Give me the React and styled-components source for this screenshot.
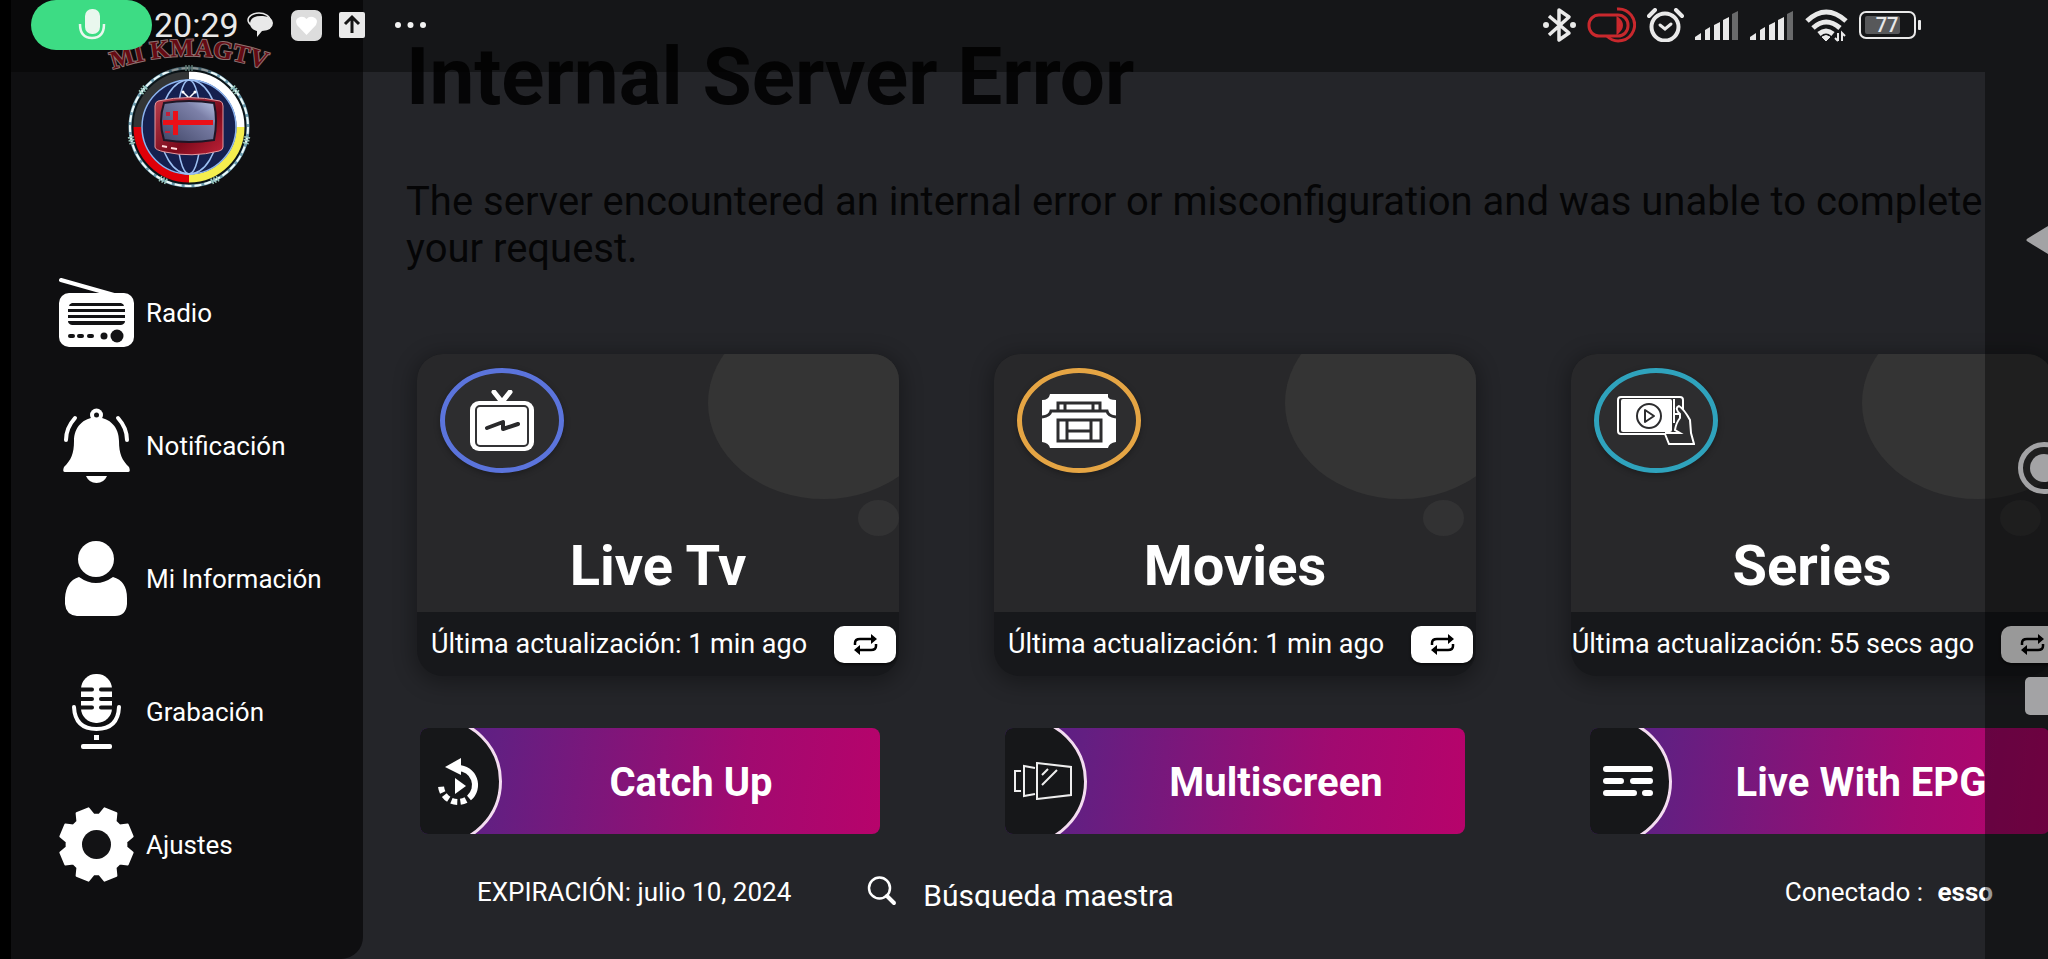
import React, { useState } from "react";
import styled, { createGlobalStyle } from "styled-components";

const GlobalStyle = createGlobalStyle`
  * {
    box-sizing: border-box;
  }

  body {
    margin: 0;
    background: #000000;
    color: #ffffff;
    font-family: Roboto, "Liberation Sans", sans-serif;
    overflow: hidden;
  }

  button,
  input {
    font-family: inherit;
    color: inherit;
    border: 0;
    padding: 0;
    background: none;
  }

  h1, h2, p {
    margin: 0;
  }

  svg {
    display: block;
    flex-shrink: 0;
  }
`;

const Screen = styled.div`
  position: relative;
  display: flex;
  min-height: 100vh;
  padding-left: 11px;
  overflow: hidden;
  background: linear-gradient(90deg, #000000 11px, #242529 11px);
`;

const Sidebar = styled.aside`
  display: flex;
  flex-direction: column;
  flex-shrink: 0;
  width: 352px;
  padding-top: 20px;
  background: #0f0f11;
  border-radius: 0 0 22px 0;
`;

const LogoWrapper = styled.div`
  display: flex;
  justify-content: center;
  height: 255px;
`;

const Menu = styled.nav`
  display: flex;
  flex-direction: column;
  gap: 58px;
  padding-left: 48px;
`;

const MenuLink = styled.a`
  display: flex;
  align-items: center;
  gap: 12px;
  height: 75px;
  font-size: 26px;
  color: #ffffff;
  text-decoration: none;
`;

const Main = styled.main`
  flex: 1;
  min-width: 0;
  padding-top: 30px;
`;

const ErrorMessage = styled.section`
  padding: 0 60px 0 43px;
  color: #050506;

  h1 {
    font-size: 80px;
    line-height: 94px;
    font-weight: 700;
  }

  p {
    margin-top: 54px;
    font-size: 40px;
    line-height: 47px;
  }
`;

const Cards = styled.section`
  display: grid;
  grid-template-columns: repeat(3, 1fr);
  gap: 95px;
  margin: 82px -5px 0 54px;
`;

const Card = styled.article`
  min-width: 0;
  border-radius: 26px;
  background: #17181b;
  box-shadow: 0 4px 20px 4px rgba(0, 0, 0, 0.3);
`;

const CardBody = styled.div`
  position: relative;
  display: flex;
  flex-direction: column;
  justify-content: space-between;
  height: 258px;
  padding: 14px 23px 13px;
  overflow: hidden;
  border-radius: 26px 26px 0 0;
  background: #28282a;

  h2 {
    position: relative;
    font-size: 56px;
    line-height: 66px;
    text-align: center;
  }
`;

const BigBubble = styled.div`
  position: absolute;
  top: -47px;
  right: -41px;
  width: 232px;
  height: 192px;
  border-radius: 50%;
  background: #343434;
`;

const SmallBubble = styled.div`
  position: absolute;
  top: 146px;
  right: ${(props) => (props.$edge ? "0px" : "12px")};
  width: 41px;
  height: 36px;
  border-radius: 50%;
  background: #323233;
`;

const IconRing = styled.div`
  position: relative;
  display: flex;
  align-items: center;
  justify-content: center;
  width: 124px;
  height: 105px;
  border: 5px solid ${(props) => props.$color};
  border-radius: 50%;
  background: #2d2d2f;
  box-shadow: 0 2px 6px rgba(0, 0, 0, 0.3);
`;

const CardFooter = styled.div`
  display: flex;
  align-items: center;
  justify-content: center;
  gap: 27px;
  height: 64px;
  padding-left: 11px;
  font-size: 27px;
  white-space: nowrap;
`;

const RefreshButton = styled.button`
  display: flex;
  flex-shrink: 0;
  align-items: center;
  justify-content: center;
  width: 62px;
  height: 37px;
  border-radius: 10px;
  background: #ffffff;
  color: #000000;
  box-shadow: 0 2px 3px rgba(0, 0, 0, 0.6);
`;

const Shortcuts = styled.section`
  display: grid;
  grid-template-columns: repeat(3, 1fr);
  gap: 125px;
  margin: 52px -2px 0 57px;
`;

const ShortcutButton = styled.button`
  display: flex;
  align-items: center;
  height: 106px;
  overflow: hidden;
  border-radius: 8px;
  background: linear-gradient(97deg, #521f86 0%, #631f82 17%, #a10a70 70%, #b7036b 100%);
  font-size: 40px;
  font-weight: 700;
  white-space: nowrap;

  span {
    flex: 1;
    padding-top: 3px;
  }
`;

const ShortcutDisc = styled.div`
  display: flex;
  flex-shrink: 0;
  align-items: center;
  justify-content: center;
  width: 86px;
  height: 129px;
  margin-left: -4px;
  padding-right: 2px;
  border: 3px solid #f3dcf0;
  border-radius: 0 65px 65px 0;
  background: #161719;
`;

const StatusRow = styled.footer`
  display: flex;
  align-items: center;
  margin-top: 42px;
  padding: 0 55px 0 114px;
  font-size: 26px;

  strong {
    margin-left: 8px;
  }
`;

const Connected = styled.div`
  margin-left: auto;
`;

const SearchLabel = styled.label`
  display: flex;
  gap: 26px;
  height: 32px;
  margin-left: 76px;
  overflow: hidden;
`;

const SearchInput = styled.input`
  width: 300px;
  height: 39px;
  font-size: 30px;
  outline: none;

  &::placeholder {
    color: #ffffff;
    opacity: 1;
  }
`;

const TopBar = styled.header`
  position: absolute;
  top: 0;
  left: 0;
  right: 0;
  display: flex;
  align-items: flex-start;
  justify-content: space-between;
  height: 72px;
  padding: 0 126px 0 31px;
  background: rgba(0, 0, 0, 0.4);
  color: #e9e9e9;
`;

const BarGroup = styled.div`
  display: flex;
  align-items: center;
  gap: ${(props) => props.$gap}px;
  height: 50px;
`;

const MicPill = styled.div`
  display: flex;
  align-items: center;
  justify-content: center;
  width: 121px;
  height: 50px;
  border-radius: 25px;
  background: #3ddc84;
`;

const Clock = styled.time`
  margin-left: 2px;
  margin-right: 8px;
  font-size: 34px;
`;

const NavBar = styled.nav`
  position: absolute;
  top: 72px;
  right: 0;
  bottom: 0;
  display: flex;
  flex-direction: column;
  gap: 176px;
  width: 63px;
  padding: 142px 0 0 33px;
  overflow: hidden;
  background: rgba(0, 0, 0, 0.4);
`;

const NavButton = styled.button`
  width: 52px;
  height: 52px;
  color: #a3a3a5;
`;

function Logo() {
  return (
    <svg width="190" height="172" viewBox="92 20 190 172">
      <defs>
        <path id="arc" d="M96 76 Q189 36 282 76" />
        <linearGradient id="tv" x1="0" y1="0" x2="1" y2="1">
          <stop offset="0" stopColor="#b8404e" />
          <stop offset="0.6" stopColor="#7d0a1c" />
          <stop offset="1" stopColor="#c02238" />
        </linearGradient>
        <linearGradient id="glass" x1="0" y1="1" x2="1" y2="0">
          <stop offset="0" stopColor="#3f4566" />
          <stop offset="0.7" stopColor="#7c80a8" />
          <stop offset="1" stopColor="#b9c4e6" />
        </linearGradient>
      </defs>
      <text
        fontFamily="'Liberation Serif', serif"
        fontSize="25"
        fontWeight="700"
        fill="#a81220"
        stroke="#e8bcbc"
        strokeWidth="2"
        paintOrder="stroke"
      >
        <textPath href="#arc" startOffset="50%" textAnchor="middle">
          MI KMAGTV
        </textPath>
      </text>
      <circle cx="189" cy="127" r="59" fill="#0b1418" stroke="#6d9db0" strokeWidth="3" />
      <circle cx="189" cy="127" r="59" fill="none" stroke="#eefafa" strokeWidth="2" strokeDasharray="7 3" />
      <g fill="none" strokeWidth="8">
        <path d="M189 75.500a51.500 51.500 0 0 1 51.500 51.500" stroke="#ffffff" />
        <path d="M240.500 127a51.500 51.500 0 0 1-51.500 51.500" stroke="#f5ee4e" />
        <path d="M189 178.500a51.500 51.500 0 0 1-51.500-51.500" stroke="#e00008" />
        <path d="M137.500 127a51.500 51.500 0 0 1 51.500-51.500" stroke="#333536" />
      </g>
      <circle cx="189" cy="127" r="47" fill="#15204f" stroke="#8db4f0" strokeWidth="1.500" />
      <g fill="none" stroke="#9dc0f3" strokeWidth="1.500">
        <ellipse cx="189" cy="127" rx="12" ry="47" />
        <ellipse cx="189" cy="127" rx="29" ry="47" />
      </g>
      {[0, 51, 103, 154, 206, 257, 309].map((angle) => (
        <g key={angle} transform={`rotate(${angle} 189 127)`}>
          <path d="M186 65v6M189 65v6M192 65v6" stroke="#9bc9bd" strokeWidth="1.500" />
        </g>
      ))}
      <path d="M183 92l6 6 6-6" fill="none" stroke="#ffffff" strokeWidth="1.500" />
      <circle cx="183" cy="92" r="1.500" fill="#ffffff" />
      <circle cx="195" cy="92" r="1.500" fill="#ffffff" />
      <path d="M158 101q31-7 62 0q3 1 3 5v41q0 3-4 4q-27 7-54 1q-10-2-10-5v-41q0-4 3-5z" fill="url(#tv)" stroke="#e59aa0" strokeWidth="1" />
      <path d="M164 103q25-4 50 0q4 18 0 37q-25 4-50 0q-6-19 0-37z" fill="url(#glass)" stroke="#1d1626" strokeWidth="2" />
      <path d="M163 120h50v5h-50zM173 111h5v24h-5z" fill="#ea1017" />
      <path d="M166 112h4v4h-4zM165 131h5v2h-5z" fill="#c3203a" />
      <path d="M162 146l5 1M171 148l6 1" stroke="#ffd9d9" strokeWidth="2" />
    </svg>
  );
}

function RadioIcon() {
  return (
    <svg width="75" height="75" viewBox="0 0 75 75">
      <path d="M2 5L55 20" stroke="#ffffff" strokeWidth="4" strokeLinecap="round" />
      <rect x="0" y="18" width="75" height="54" rx="10" fill="#ffffff" />
      <g fill="#131315">
        <path d="M13 28h49q3 1 3 3H10q0-2 3-3z" />
        <rect x="9" y="34" width="57" height="3" />
        <rect x="9" y="40" width="57" height="3" />
        <path d="M9 46h57q0 3-4 4H13q-4-1-4-4z" />
        <rect x="9" y="59" width="7" height="4" rx="2" />
        <rect x="18" y="59" width="7" height="4" rx="2" />
        <rect x="28" y="59" width="7" height="4" rx="2" />
        <circle cx="45" cy="61" r="3.500" />
        <circle cx="58" cy="61" r="6.500" />
      </g>
    </svg>
  );
}

function BellIcon() {
  return (
    <svg width="75" height="75" viewBox="0 0 75 75">
      <path
        d="M37.500 9C24 10 15 19 15 33C15 46 12 52 5 59Q3 64 6 64H69Q72 64 70 59C63 52 60 46 60 33C60 19 51 10 37.500 9z"
        fill="#ffffff"
      />
      <circle cx="37.500" cy="7" r="6.500" fill="#ffffff" />
      <circle cx="37.500" cy="7" r="2.500" fill="#131315" />
      <path d="M27 68h21q-3 7-10.500 7T27 68z" fill="#ffffff" />
      <path d="M16 10Q7 20 7 32M59 10Q68 20 68 32" fill="none" stroke="#ffffff" strokeWidth="4" strokeLinecap="round" />
    </svg>
  );
}

function PersonIcon() {
  return (
    <svg width="75" height="75" viewBox="0 0 75 75">
      <circle cx="37" cy="18" r="18" fill="#ffffff" />
      <path d="M20 36Q37 48 54 36Q68 40 68 57V63Q67 75 56 75H18Q7 74 6 63V57Q7 40 20 36z" fill="#ffffff" />
    </svg>
  );
}

function MicIcon() {
  return (
    <svg width="75" height="75" viewBox="0 0 75 75">
      <rect x="22" y="0" width="31" height="49" rx="15" fill="#ffffff" />
      <path
        d="M22 15.500H33M22 25H33M22 33.500H33M53 15.500H42M53 25H42M53 33.500H42"
        stroke="#131315"
        strokeWidth="4"
        strokeLinecap="round"
      />
      <path d="M15 33Q16 55 37.500 55T60 33" fill="none" stroke="#ffffff" strokeWidth="4" strokeLinecap="round" />
      <rect x="35" y="61" width="5" height="5" fill="#ffffff" />
      <rect x="22" y="70" width="31" height="5" rx="2" fill="#ffffff" />
    </svg>
  );
}

const gearPoint = (radius, degrees) => {
  const angle = (degrees * Math.PI) / 180;
  return `${37.5 + radius * Math.sin(angle)},${37.5 - radius * Math.cos(angle)}`;
};

const gearPoints = [0, 1, 2, 3, 4, 5, 6, 7]
  .map((tooth) => {
    const middle = 22.5 + tooth * 45;
    return [
      gearPoint(30, middle - 17),
      gearPoint(37, middle - 10),
      gearPoint(37, middle + 10),
      gearPoint(30, middle + 17),
    ].join(" ");
  })
  .join(" ");

function GearIcon() {
  return (
    <svg width="75" height="75" viewBox="0 0 75 75">
      <polygon points={gearPoints} fill="#ffffff" stroke="#ffffff" strokeWidth="2" strokeLinejoin="round" />
      <circle cx="37.500" cy="37.500" r="14.500" fill="#131315" />
    </svg>
  );
}

function TvIcon() {
  return (
    <svg width="66" height="62" viewBox="0 0 66 62">
      <path d="M25 2L33 12L41 2" fill="none" stroke="#ffffff" strokeWidth="5" strokeLinecap="round" />
      <rect x="1" y="11" width="64" height="50" rx="9" fill="#ffffff" />
      <rect x="7" y="16" width="52" height="40" rx="4" fill="none" stroke="#333335" strokeWidth="2" />
      <path d="M18 38L34 32V39L49 34" fill="none" stroke="#29292b" strokeWidth="4" strokeLinecap="round" strokeLinejoin="round" />
    </svg>
  );
}

function TicketIcon() {
  return (
    <svg width="74" height="54" viewBox="0 0 74 54">
      <path d="M8 0H66V3Q67 6 74 6V48Q67 49 66 54H8Q7 49 0 48V6Q7 6 8 0z" fill="#ffffff" />
      <path d="M0 23Q8 22 9 17H65Q66 22 74 23" fill="none" stroke="#2d2d2f" strokeWidth="3" />
      <path d="M16 17V9H58V17M23 9V17M51 9V17" fill="none" stroke="#2d2d2f" strokeWidth="3" />
      <path d="M16 26H59V47H16zM25 26V47M49 26V47M25 37H49" fill="none" stroke="#2d2d2f" strokeWidth="3" />
    </svg>
  );
}

function PhoneVideoIcon() {
  return (
    <svg width="78" height="50" viewBox="0 0 78 50">
      <rect x="1" y="1" width="65" height="37" rx="3" fill="#2d2d2f" stroke="#ffffff" strokeWidth="2" />
      <rect x="4" y="3" width="51" height="33" rx="2" fill="#ffffff" />
      <circle cx="32" cy="20" r="12" fill="none" stroke="#2d2d2f" strokeWidth="2" />
      <path d="M28 14V26L37 20z" fill="none" stroke="#2d2d2f" strokeWidth="2" strokeLinejoin="round" />
      <path
        d="M48 38L52 48H77L74 37L73 24Q67 13 62 10Q57 12 63 18V22Q59 27 58 34L63 37H48"
        fill="#2d2d2f"
        stroke="#ffffff"
        strokeWidth="2"
      />
      <path d="M57 3V27M57 18H62" stroke="#ffffff" strokeWidth="2" />
    </svg>
  );
}

function RepeatIcon() {
  return (
    <svg width="25" height="21" viewBox="0 0 25 21">
      <path d="M2 11V9Q2 5 7 5H18M23 10V12Q23 16 18 16H7" fill="none" stroke="currentColor" strokeWidth="2.500" />
      <path d="M18 0L24 5L18 10zM7 11L1 16L7 21z" fill="currentColor" />
    </svg>
  );
}

function CatchUpIcon() {
  return (
    <svg width="41" height="47" viewBox="0 0 41 47">
      <path d="M20 10A17 17 0 0 1 31 40" fill="none" stroke="#ffffff" strokeWidth="6" />
      <path d="M28 42A17 17 0 0 1 3 28" fill="none" stroke="#ffffff" strokeWidth="6" strokeDasharray="6 3" />
      <path d="M23 0V17L7 9z" fill="#ffffff" />
      <path d="M17 20V36L28 28z" fill="#ffffff" />
    </svg>
  );
}

function ScreensIcon() {
  return (
    <svg width="58" height="38" viewBox="0 0 58 38" fill="none" stroke="#eeeeee" strokeWidth="2">
      <path d="M7 9H1V29H7M21 6L10 4V34L21 32M23 1L57 5V33L23 37z" />
      <path d="M28 13L34 7M28 23L43 8" />
    </svg>
  );
}

function EpgIcon() {
  return (
    <svg width="50" height="32" viewBox="0 0 50 32" stroke="#ffffff" strokeWidth="6" strokeLinecap="round">
      <path d="M3 4H47M3 16H18M30 16H47M3 28H31M42 28H47" />
    </svg>
  );
}

function SearchIcon() {
  return (
    <svg width="30" height="30" viewBox="0 0 30 30" fill="none" stroke="#ffffff" strokeLinecap="round">
      <circle cx="12.500" cy="12" r="10.500" strokeWidth="2.500" />
      <path d="M20 20L27 27" strokeWidth="4" />
    </svg>
  );
}

function SignalIcon() {
  return (
    <svg width="44" height="29" viewBox="0 0 44 29" fill="currentColor">
      <path d="M0 29V26L6 22V29zM10 29V19L15 16V29zM19 29V14L25 11V29zM28 29V9L34 6V29z" />
      <path d="M37 29V3L43 0V29z" opacity="0.4" />
    </svg>
  );
}

function StatusIcons() {
  return (
    <BarGroup $gap={11}>
      <svg width="33" height="36" viewBox="0 0 33 36" fill="none" stroke="currentColor" strokeWidth="4">
        <path d="M6 9L26 26L16 33V3L26 10L6 28" strokeLinejoin="round" strokeWidth="3.500" />
        <circle cx="3" cy="18" r="1.500" strokeWidth="3" />
        <circle cx="30" cy="18" r="1.500" strokeWidth="3" />
      </svg>
      <svg width="49" height="36" viewBox="0 0 49 36" fill="none" stroke="#c9282d" strokeWidth="3">
        <rect x="2" y="8" width="39" height="21" rx="10" />
        <path d="M30 2A16 16 0 1 1 20 29" />
        <path d="M31 12V25Q38 18 31 12z" fill="#e52a2e" />
      </svg>
      <svg width="37" height="34" viewBox="0 0 37 34" fill="none" stroke="currentColor" strokeLinecap="round">
        <circle cx="18" cy="19" r="13.500" strokeWidth="4" />
        <path d="M13 17L18 21L24 16" strokeWidth="3" />
        <path d="M2 8L8 2M35 8L29 2" strokeWidth="4" />
      </svg>
      <SignalIcon />
      <SignalIcon />
      <svg width="43" height="33" viewBox="0 0 43 33" fill="none" stroke="currentColor" strokeWidth="5">
        <path d="M2 12Q21-6 41 12M8 19Q21 7 35 19M14 25Q21 19 28 25" />
        <path d="M17 28Q21 25 25 28L21 32z" fill="currentColor" strokeWidth="1" />
        <path d="M33 24V32M30 29L33 32M37 32V24L40 27" strokeWidth="2" />
      </svg>
      <svg width="63" height="28" viewBox="0 0 63 28">
        <rect x="1" y="1" width="55" height="26" rx="6" fill="none" stroke="currentColor" strokeWidth="2" />
        <rect x="6" y="5" width="35" height="18" rx="2" fill="#57585a" />
        <rect x="59" y="9" width="3" height="10" rx="1" fill="currentColor" />
        <text x="28" y="21" textAnchor="middle" fontSize="20" fontWeight="500" fill="currentColor">
          77
        </text>
      </svg>
    </BarGroup>
  );
}

const menuItems = [
  { label: "Radio", icon: <RadioIcon /> },
  { label: "Notificación", icon: <BellIcon /> },
  { label: "Mi Información", icon: <PersonIcon /> },
  { label: "Grabación", icon: <MicIcon /> },
  { label: "Ajustes", icon: <GearIcon /> },
];

const cards = [
  { title: "Live Tv", color: "#5b74dc", updated: "1 min ago", icon: <TvIcon />, edge: true },
  { title: "Movies", color: "#e5a544", updated: "1 min ago", icon: <TicketIcon /> },
  { title: "Series", color: "#2fa3bd", updated: "55 secs ago", icon: <PhoneVideoIcon /> },
];

const shortcuts = [
  { label: "Catch Up", icon: <CatchUpIcon /> },
  { label: "Multiscreen", icon: <ScreensIcon /> },
  { label: "Live With EPG", icon: <EpgIcon /> },
];

function App() {
  const [search, setSearch] = useState("");

  return (
    <>
      <GlobalStyle />
      <Screen>
        <Sidebar>
          <LogoWrapper>
            <Logo />
          </LogoWrapper>
          <Menu>
            {menuItems.map((item) => (
              <MenuLink key={item.label} href="#">
                {item.icon}
                {item.label}
              </MenuLink>
            ))}
          </Menu>
        </Sidebar>

        <Main>
          <ErrorMessage>
            <h1>Internal Server Error</h1>
            <p>
              The server encountered an internal error or misconfiguration and
              was unable to complete your request.
            </p>
          </ErrorMessage>

          <Cards>
            {cards.map((card) => (
              <Card key={card.title}>
                <CardBody>
                  <BigBubble />
                  <SmallBubble $edge={card.edge} />
                  <IconRing $color={card.color}>{card.icon}</IconRing>
                  <h2>{card.title}</h2>
                </CardBody>
                <CardFooter>
                  Última actualización: {card.updated}
                  <RefreshButton aria-label="Actualizar">
                    <RepeatIcon />
                  </RefreshButton>
                </CardFooter>
              </Card>
            ))}
          </Cards>

          <Shortcuts>
            {shortcuts.map((shortcut) => (
              <ShortcutButton key={shortcut.label}>
                <ShortcutDisc>{shortcut.icon}</ShortcutDisc>
                <span>{shortcut.label}</span>
              </ShortcutButton>
            ))}
          </Shortcuts>

          <StatusRow>
            <p>EXPIRACIÓN: julio 10, 2024</p>
            <SearchLabel>
              <SearchIcon />
              <SearchInput
                type="text"
                name="search"
                aria-label="Búsqueda maestra"
                placeholder="Búsqueda maestra"
                value={search}
                onChange={(event) => setSearch(event.target.value)}
              />
            </SearchLabel>
            <Connected>
              Conectado : <strong>esso</strong>
            </Connected>
          </StatusRow>
        </Main>

        <TopBar>
          <BarGroup $gap={0}>
            <MicPill>
              <svg width="28" height="32" viewBox="0 0 28 32">
                <rect x="7" y="0" width="15" height="25" rx="7" fill="#e9f7ee" />
                <path d="M2 15Q2 29 14 29T26 15" fill="none" stroke="#e9f7ee" strokeWidth="2.500" />
              </svg>
            </MicPill>
            <Clock>20:29</Clock>
            <BarGroup $gap={17}>
              <svg width="27" height="26" viewBox="0 0 27 26">
                <ellipse cx="12" cy="8" rx="11" ry="7" fill="none" stroke="#e9e9e9" strokeWidth="1.500" />
                <path d="M14 4H16Q26 5 26 11Q26 18 15 19L10 25V19Q3 17 3 11Q4 4 14 4z" fill="#e9e9e9" />
              </svg>
              <svg width="31" height="31" viewBox="0 0 31 31">
                <rect width="31" height="31" rx="7" fill="#dddddd" />
                <path d="M15.500 25L6 15Q3 9 9 7Q13 6 15.500 9Q18 6 22 7Q28 9 25 15z" fill="#ffffff" />
              </svg>
              <svg width="26" height="26" viewBox="0 0 26 26">
                <rect width="26" height="26" rx="2" fill="#e9e9e9" />
                <path d="M13 21V6M6 12L13 5L20 12" fill="none" stroke="#141414" strokeWidth="3" />
              </svg>
            </BarGroup>
            <svg width="62" height="8" viewBox="0 0 62 8" fill="#f2f2f2">
              <circle cx="33" cy="4" r="3" />
              <circle cx="45.500" cy="4" r="3" />
              <circle cx="58" cy="4" r="3" />
            </svg>
          </BarGroup>
          <StatusIcons />
        </TopBar>

        <NavBar>
          <NavButton aria-label="Atrás">
            <svg width="52" height="52" viewBox="0 0 52 52">
              <path d="M10 26L44 5V47z" fill="currentColor" stroke="currentColor" strokeWidth="3" strokeLinejoin="round" />
            </svg>
          </NavButton>
          <NavButton aria-label="Inicio">
            <svg width="52" height="52" viewBox="0 0 52 52">
              <circle cx="26" cy="26" r="23.500" fill="none" stroke="currentColor" strokeWidth="5" />
              <circle cx="26" cy="26" r="14" fill="currentColor" />
            </svg>
          </NavButton>
          <NavButton aria-label="Recientes">
            <svg width="52" height="52" viewBox="0 0 52 52">
              <rect x="7" y="7" width="38" height="38" rx="5" fill="currentColor" />
            </svg>
          </NavButton>
        </NavBar>
      </Screen>
    </>
  );
}

export default App;
